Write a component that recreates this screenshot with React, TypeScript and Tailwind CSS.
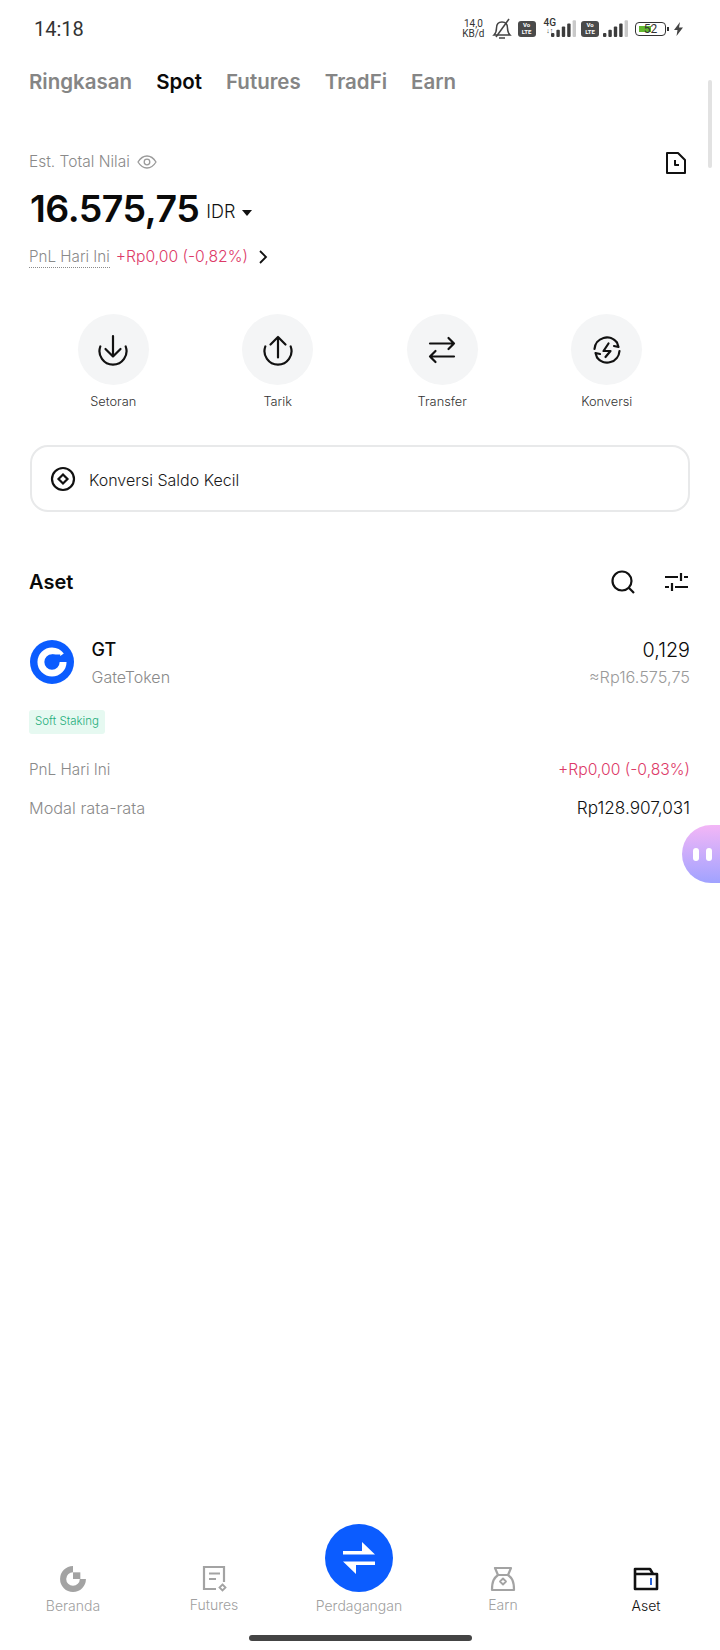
import React from 'react';

const GateMark = ({ size, ring, dot, tab }: { size: number; ring: string; dot: string; tab?: boolean }) => (
  <svg width={size} height={size} viewBox="0 0 24 24" fill="none">
    <path d="M12 4.600A7.400 7.400 0 1 0 19.400 12" stroke={ring} strokeWidth="4.600" />
    {tab && <path d="M12 4.600A7.400 7.400 0 0 1 18 7.700" stroke={ring} strokeWidth="4.600" />}
    <rect x="12" y="7" width="5.500" height="5" fill={dot} />
  </svg>
);

const Signal = ({ faded }: { faded: number }) => (
  <svg width="26" height="17" viewBox="0 0 26 17">
    {[0, 1, 2, 3, 4].map((i) => (
      <rect
        key={i}
        x={i * 5.4}
        y={13 - i * 3.2}
        width="3.4"
        height={4 + i * 3.2}
        rx="1"
        fill={i >= faded ? '#c9c9c9' : '#3c3c3c'}
      />
    ))}
  </svg>
);

const VoLte = () => (
  <div className="flex h-[16px] w-[18px] flex-col items-center justify-center rounded-[3px] bg-[#4a4a4a] text-[6px] leading-[6.5px] font-bold text-white">
    <span>Vo</span>
    <span>LTE</span>
  </div>
);

const StatusBar = () => (
  <div className="flex h-[57px] items-center justify-between pr-[36px] pl-[34px] font-['Roboto',sans-serif] font-normal text-[#333333]">
    <span className="text-[20px]">14:18</span>
    <div className="flex items-center">
      <div className="mr-[7px] flex flex-col items-center text-[10px] leading-[10px]">
        <span>14,0</span>
        <span>KB/d</span>
      </div>
      <svg width="20" height="22" viewBox="0 0 20 22" fill="none" stroke="#444444" strokeWidth="1.5" className="mr-[6px]">
        <path d="M2 17h16c-2-2-2.500-4-2.500-7C15.500 6.500 13.500 4 10 4S4.500 6.500 4.500 10c0 3-.5 5-2.500 7Z" />
        <path d="M7 20h6" />
        <path d="M17 1 4 19" />
      </svg>
      <VoLte />
      <div className="z-10 -mr-[5px] ml-[8px] flex flex-col items-center self-start text-[10px] leading-[9px] font-medium">
        <span>4G</span>
        <span className="text-[7px] leading-[9px]">↓↑</span>
      </div>
      <Signal faded={4} />
      <div className="ml-[4px]">
        <VoLte />
      </div>
      <div className="ml-[4px]">
        <Signal faded={4} />
      </div>
      <div className="relative ml-[6px] flex h-[14px] w-[31px] items-center justify-center rounded-[4px] border border-[#333333] text-[12px] leading-none">
        <span className="absolute top-[3px] left-[3px] h-[6px] w-[12px] bg-[#62b82e]" />
        <span className="relative">52</span>
      </div>
      <span className="ml-[1px] h-[4px] w-[2px] bg-[#333333]" />
      <svg width="11" height="14" viewBox="0 0 11 14" fill="#444444" className="ml-[4px]">
        <path d="M7 0 1 8h3.500L3.500 14 10 5.500H6Z" />
      </svg>
    </div>
  </div>
);

const iconProps = {
  fill: 'none',
  stroke: '#111111',
  strokeWidth: 2.2,
  strokeLinecap: 'round' as const,
  strokeLinejoin: 'round' as const,
};

const actions = [
  {
    label: 'Setoran',
    icon: (
      <svg width="32" height="32" viewBox="0 0 32 32" {...iconProps}>
        <path d="M3.300 12.500A13.500 13.500 0 1 0 28.700 12.500" />
        <path d="M16 2v20.500M8.500 15 16 22.500 23.500 15" />
      </svg>
    ),
  },
  {
    label: 'Tarik',
    icon: (
      <svg width="32" height="32" viewBox="0 0 32 32" {...iconProps}>
        <path d="M3.300 12.500A13.500 13.500 0 1 0 28.700 12.500" />
        <path d="M16 23.500V3M8.500 10.500 16 3l7.500 7.500" />
      </svg>
    ),
  },
  {
    label: 'Transfer',
    icon: (
      <svg width="32" height="32" viewBox="0 0 32 32" {...iconProps}>
        <path d="M4 9.500h24M22.500 4l5.500 5.500-5.500 5.500M28 22.500H4M9.500 17 4 22.500 9.500 28" />
      </svg>
    ),
  },
  {
    label: 'Konversi',
    icon: (
      <svg width="32" height="32" viewBox="0 0 32 32" {...iconProps}>
        <path d="M3.500 15A12.500 12.500 0 0 1 26 8.500l1.500 4.500-4.500-1" />
        <path d="M28.500 17A12.500 12.500 0 0 1 6 23.500L4.500 19l4.500 1" />
        <path d="M17.500 9.500 12.500 17h7l-5 6" />
      </svg>
    ),
  },
];

const ActionButtons = () => (
  <div className="mt-[45px] grid grid-cols-4 px-[31px]">
    {actions.map((a) => (
      <div key={a.label} className="flex flex-col items-center">
        <div className="flex h-[71px] w-[71px] items-center justify-center rounded-full bg-[#f4f5f6]">{a.icon}</div>
        <span className="mt-[8px] text-[12.800px] leading-[18px] text-[#333333]">{a.label}</span>
      </div>
    ))}
  </div>
);

const navGray = '#a3a3a3';

const BottomNav = () => (
  <div className="grid grid-cols-[146px_136px_154px_134px_152px] items-end text-[14px] text-[#a0a0a0]">
    <div className="flex flex-col items-center">
      <GateMark size={32} ring={navGray} dot={navGray} />
      <span className="mt-[1px] leading-[20px]">Beranda</span>
    </div>
    <div className="flex flex-col items-center">
      <svg width="28" height="28" viewBox="0 0 28 28" fill="none" stroke={navGray} strokeWidth="2.200">
        <path d="M16 24H4V2h20v15" />
        <path d="M9 8.500h11M9 14h7" />
        <path d="M22.500 19.500l3 3-3 3-3-3Z" strokeWidth="1.800" />
      </svg>
      <span className="mt-[2px] mb-[1px] leading-[20px]">Futures</span>
    </div>
    <div className="flex flex-col items-center">
      <div className="flex h-[68px] w-[68px] items-center justify-center rounded-full bg-[#0b5cff]">
        <svg width="34" height="36" viewBox="0 0 34 36" fill="#ffffff">
          <path d="M1 11h19V2l13 12.500H1ZM33 25H14v9L1 21.500h32Z" />
        </svg>
      </div>
      <span className="mt-[4px] leading-[20px]">Perdagangan</span>
    </div>
    <div className="flex flex-col items-center">
      <svg width="26" height="26" viewBox="0 0 26 26" fill="none" stroke={navGray} strokeWidth="2.200" strokeLinejoin="round">
        <path d="M5 2h16l-3 7H8Z" />
        <path d="M8 9c-4 3-6 6-6 15h22c0-9-2-12-6-15" />
        <path d="M13 12.500l3 3-3 3-3-3Z" strokeWidth="1.800" />
      </svg>
      <span className="mt-[3px] mb-[1px] leading-[20px]">Earn</span>
    </div>
    <div className="flex flex-col items-center text-[#111111]">
      <svg width="26" height="24" viewBox="0 0 26 24" fill="none" stroke="#111111" strokeWidth="2.600" strokeLinejoin="round">
        <path d="M2 7V2h15l3 5h4v15H2V7h18" />
        <rect x="17" y="11" width="2" height="7" fill="#2b64d8" stroke="none" />
      </svg>
      <span className="mt-[5px] leading-[20px]">Aset</span>
    </div>
  </div>
);

export default function App() {
  return (
    <div className="relative flex h-[1650px] w-[720px] flex-col overflow-hidden bg-white font-['Inter',sans-serif] font-[350] text-[#111111]">
      <StatusBar />

      {/* Tabs */}
      <div className="mt-[12px] flex gap-[24px] pl-[29px] text-[20.500px] leading-[26px] font-semibold text-[#858585]">
        <span>Ringkasan</span>
        <span className="text-[#0a0a0a]">Spot</span>
        <span>Futures</span>
        <span>TradFi</span>
        <span>Earn</span>
      </div>

      {/* Total */}
      <div className="mt-[56px] pr-[30px] pl-[29px]">
        <div className="flex items-start justify-between">
          <div className="flex items-center gap-[7px] text-[15.500px] leading-[22px] text-[#8a8a8a]">
            <span>Est. Total Nilai</span>
            <svg width="20" height="14" viewBox="0 0 20 14" fill="none" stroke="#9a9a9a" strokeWidth="1.300">
              <path d="M1 7c2.500-4 5.500-6 9-6s6.500 2 9 6c-2.500 4-5.500 6-9 6s-6.500-2-9-6Z" />
              <circle cx="10" cy="7" r="2.800" />
            </svg>
          </div>
          <svg width="20" height="22" viewBox="0 0 20 22" fill="none" stroke="#111111" strokeWidth="2" className="mt-[1px] mr-[4px]" strokeLinejoin="round">
            <path d="M1 1h11l7 7v13H1Z" />
            <path d="M9 8v5h4" />
          </svg>
        </div>
        <div className="mt-[12px] flex items-center pl-[1px]">
          <span className="text-[37.500px] leading-[46px] font-semibold tracking-[-0.5px] text-[#0a0a0a]">16.575,75</span>
          <span className="mt-[6px] ml-[7px] text-[18px] leading-[24px]">IDR</span>
          <span className="mt-[8px] ml-[7px] h-0 w-0 border-x-[5px] border-t-[6px] border-x-transparent border-t-[#111111]" />
        </div>
        <div className="mt-[13px] flex items-center text-[15.700px] leading-[24px]">
          <span className="border-b border-dotted border-[#8a8a8a] text-[15.200px] leading-[20px] text-[#8a8a8a]">PnL Hari Ini</span>
          <span className="ml-[6px] text-[#dd3a68]">+Rp0,00 (-0,82%)</span>
          <svg width="10" height="14" viewBox="0 0 10 14" fill="none" stroke="#111111" strokeWidth="1.800" className="ml-[10px]">
            <path d="M2 1l6 6-6 6" />
          </svg>
        </div>
      </div>

      <ActionButtons />

      {/* Small balance convert */}
      <div className="mx-[30px] mt-[34px] flex h-[67px] items-center gap-[13px] rounded-[18px] border-2 border-[#e8e9ea] pl-[18px] text-[16px] text-[#1a1a1a]">
        <svg width="26" height="26" viewBox="0 0 26 26" fill="none" stroke="#111111" strokeWidth="2.200">
          <circle cx="13" cy="13" r="11" />
          <path d="M13 8.500l4.500 4.500-4.500 4.500L8.500 13Z" />
        </svg>
        <span className="mt-[2px]">Konversi Saldo Kecil</span>
      </div>

      {/* Assets header */}
      <div className="mt-[56px] flex items-center justify-between pr-[32px] pl-[29px]">
        <span className="text-[20px] leading-[28px] font-semibold text-[#0a0a0a]">Aset</span>
        <div className="flex items-center gap-[29px]">
          <svg width="24" height="24" viewBox="0 0 24 24" fill="none" stroke="#111111" strokeWidth="2.200">
            <circle cx="11" cy="11" r="9.500" />
            <path d="M17.800 17.800 23 23" />
          </svg>
          <svg width="24" height="22" viewBox="0 0 24 22" fill="none" stroke="#111111" strokeWidth="2.200">
            <path d="M1 6h13M20 6h4M17 2v8M1 16h4M11 16h13M8 12v8" />
          </svg>
        </div>
      </div>

      {/* Asset row */}
      <div className="mt-[44px] flex items-start justify-between pr-[30px] pl-[29.500px]">
        <div className="flex items-start gap-[18px]">
          <div className="flex h-[44px] w-[44px] items-center justify-center rounded-full bg-[#0b5cff]">
            <GateMark size={36} ring="#ffffff" dot="#0b5cff" tab />
          </div>
          <div className="-mt-[3px] flex flex-col">
            <span className="text-[18px] leading-[26px] font-medium text-[#0a0a0a]">GT</span>
            <span className="mt-[2px] text-[16px] leading-[24px] text-[#8a8a8a]">GateToken</span>
          </div>
        </div>
        <div className="-mt-[3px] flex flex-col items-end">
          <span className="text-[19.800px] leading-[26px] text-[#0a0a0a]">0,129</span>
          <span className="mt-[2px] text-[16.300px] leading-[24px] text-[#9a9a9a]">≈Rp16.575,75</span>
        </div>
      </div>

      <div className="mt-[21px] self-start pl-[29px]">
        <span className="flex h-[24px] items-center rounded-[3px] bg-[#e6f9f1] px-[6px] text-[11.500px] text-[#1fae7c]">Soft Staking</span>
      </div>

      {/* Details */}
      <div className="mt-[24px] flex flex-col gap-[14px] pr-[30px] pl-[29px] leading-[24px]">
        <div className="flex justify-between">
          <span className="text-[15.300px] text-[#8a8a8a]">PnL Hari Ini</span>
          <span className="text-[15.700px] text-[#dd3a68]">+Rp0,00 (-0,83%)</span>
        </div>
        <div className="flex justify-between">
          <span className="text-[16.300px] text-[#8a8a8a]">Modal rata-rata</span>
          <span className="text-[17.200px] text-[#111111]">Rp128.907,031</span>
        </div>
      </div>

      <div className="flex-1" />

      <BottomNav />
      <div className="mt-[19px] mb-[9px] flex justify-center">
        <div className="h-[6px] w-[223px] rounded-full bg-[#444444]" />
      </div>

      {/* Scrollbar */}
      <div className="absolute top-[80px] right-[8px] h-[88px] w-[4px] rounded-full bg-[#e2e2e2]" />

      {/* Floating assistant */}
      <div className="absolute top-[825px] right-0 flex h-[58px] w-[38px] items-center gap-[7px] rounded-l-[29px] bg-gradient-to-b from-[#f3b6f6] to-[#a0a2ff] pl-[11px]">
        <span className="h-[13px] w-[6px] rounded-full bg-white" />
        <span className="h-[13px] w-[6px] rounded-full bg-white" />
      </div>
    </div>
  );
}
